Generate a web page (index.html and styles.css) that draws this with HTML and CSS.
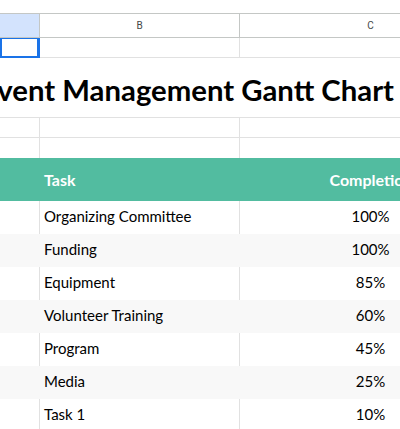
FILE: index.html
```html
<!DOCTYPE html>
<html>
<head>
<meta charset="utf-8">
<link rel="stylesheet" href="styles.css">
</head>
<body>
<div class="sheet">
  <div class="topbar"></div>
  <div class="row colhead">
    <div class="cell hA"></div>
    <div class="cell hB">B</div>
    <div class="cell hC">C</div>
  </div>
  <div class="row r20">
    <div class="cell selected"></div>
    <div class="cell"></div>
    <div class="cell"></div>
  </div>
  <div class="row title-row">
    <div class="title">Event Management Gantt Chart</div>
  </div>
  <div class="row r20">
    <div class="cell"></div>
    <div class="cell"></div>
    <div class="cell"></div>
  </div>
  <div class="row r20 nobottom">
    <div class="cell"></div>
    <div class="cell"></div>
    <div class="cell"></div>
  </div>
  <div class="row thead">
    <div class="cell"></div>
    <div class="cell">Task</div>
    <div class="cell center">Completion</div>
  </div>
  <div class="row data">
    <div class="cell"></div>
    <div class="cell">Organizing Committee</div>
    <div class="cell center">100%</div>
  </div>
  <div class="row data alt">
    <div class="cell"></div>
    <div class="cell">Funding</div>
    <div class="cell center">100%</div>
  </div>
  <div class="row data">
    <div class="cell"></div>
    <div class="cell">Equipment</div>
    <div class="cell center">85%</div>
  </div>
  <div class="row data alt">
    <div class="cell"></div>
    <div class="cell">Volunteer Training</div>
    <div class="cell center">60%</div>
  </div>
  <div class="row data">
    <div class="cell"></div>
    <div class="cell">Program</div>
    <div class="cell center">45%</div>
  </div>
  <div class="row data alt">
    <div class="cell"></div>
    <div class="cell">Media</div>
    <div class="cell center">25%</div>
  </div>
  <div class="row data">
    <div class="cell"></div>
    <div class="cell">Task 1</div>
    <div class="cell center">10%</div>
  </div>
</div>
</body>
</html>
```
FILE: styles.css
```css
html, body {
  margin: 0;
  padding: 0;
  background: #ffffff;
  overflow: hidden;
}
.sheet {
  width: 502px;
  font-family: Lato, "Open Sans", sans-serif;
  color: #000;
}
.topbar {
  height: 14px;
  border-bottom: 1px solid #c4c7c5;
  box-sizing: border-box;
}
.row {
  display: grid;
  grid-template-columns: 40px 200px 262px;
}
.cell {
  box-sizing: border-box;
  border-right: 1px solid #e1e1e1;
  border-bottom: 1px solid #e1e1e1;
  overflow: hidden;
  white-space: nowrap;
}
.colhead {
  height: 24px;
}
.colhead .cell {
  border-right: 1px solid #c4c7c5;
  border-bottom: 1px solid #c4c7c5;
  font-family: Roboto, Arial, sans-serif;
  font-size: 10px;
  color: #444746;
  text-align: center;
  line-height: 23px;
}
.colhead .hA {
  background: #d3e3fd;
}
.r20 {
  height: 20px;
}
.selected {
  border: 2px solid #1a73e8;
  border-top-width: 1px;
  border-right-width: 3px;
  border-bottom-width: 2px;
}
.title-row {
  height: 60px;
  display: block;
  border-bottom: 1px solid #e1e1e1;
  box-sizing: border-box;
}
.title {
  margin-left: -19px;
  font-size: 29.3px;
  font-weight: 700;
  line-height: 59px;
  padding-top: 2px;
  white-space: nowrap;
}
.nobottom .cell {
  border-bottom: none;
}
.thead {
  height: 43px;
  background: #52bca0;
}
.thead .cell {
  border: none;
  color: #ffffff;
  font-weight: 700;
  font-size: 16px;
  line-height: 43px;
  padding-left: 4px;
}
.thead .center {
  padding-left: 0;
  text-align: center;
}
.data {
  height: 33px;
  background: #ffffff;
}
.data .cell {
  border-bottom: none;
  font-size: 15px;
  line-height: 31px;
  padding-left: 4px;
}
.data .center {
  padding-left: 0;
  text-align: center;
}
.data.alt {
  background: #f8f8f8;
}
.data.alt .cell {
  border-right-color: #f8f8f8;
}
```
